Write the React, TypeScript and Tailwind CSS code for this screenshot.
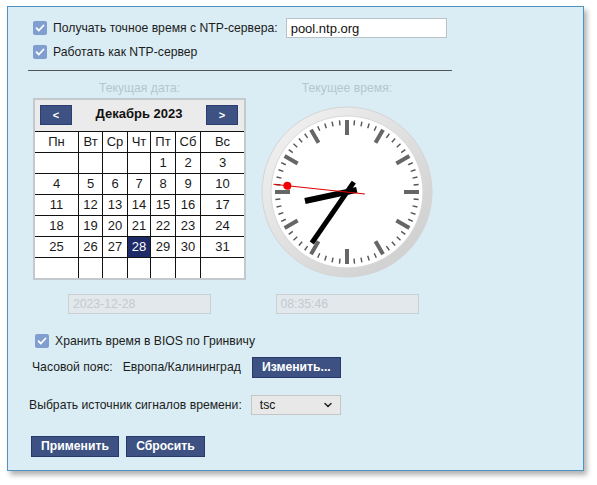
import { ChevronDown } from 'lucide-react';

const font = "font-['Liberation_Sans',Arial,sans-serif]";

function Check({ className = '' }: { className?: string }) {
  return (
    <span className={`flex h-[14px] w-[14px] flex-shrink-0 items-center justify-center rounded-[2px] bg-[#809fd0] ${className}`}>
      <svg width="10" height="10" viewBox="0 0 10 10" fill="none">
        <path d="M1.5 5.2l2.3 2.3L8.5 2.5" stroke="white" strokeWidth={1.8} strokeLinecap="round" strokeLinejoin="round" />
      </svg>
    </span>
  );
}

function Btn({ children, className = '' }: { children: React.ReactNode; className?: string }) {
  return (
    <button className={`flex h-[21px] items-center justify-center border border-[#27386a] bg-[#3d5183] text-[12.2px] font-bold text-white ${className}`}>
      {children}
    </button>
  );
}

const days = ['Пн', 'Вт', 'Ср', 'Чт', 'Пт', 'Сб', 'Вс'];

function Calendar() {
  // December 2023 starts on Friday
  const cells: (number | null)[] = [];
  for (let i = 0; i < 4; i++) cells.push(null);
  for (let d = 1; d <= 31; d++) cells.push(d);
  while (cells.length < 42) cells.push(null);

  return (
    <div className="w-[213px] border-2 border-[#c3c9cc] bg-white">
      <div className="flex h-[31px] items-start justify-between bg-[#ebebeb] px-[5px] pt-[5px]">
        <button className="flex h-[20px] w-[32px] items-center justify-center border border-[#2c3e70] bg-[#3d5183] text-[11px] font-bold text-white">&lt;</button>
        <span className="mt-[-1px] text-[13px] font-bold text-[#111]">Декабрь 2023</span>
        <button className="mr-px flex h-[20px] w-[32px] items-center justify-center border border-[#2c3e70] bg-[#3d5183] text-[11px] font-bold text-white">&gt;</button>
      </div>
      <div className="grid grid-cols-[43px_23px_24px_22px_24px_24px_43px] gap-px border-t border-[#111] bg-[#111]">
        {days.map((d) => (
          <div key={d} className="flex h-[20px] items-center justify-center bg-white text-[13px] text-[#1a1a1a]">
            {d}
          </div>
        ))}
        {cells.map((c, i) => (
          <div
            key={i}
            className={`flex h-[20px] items-center justify-center text-[13px] ${
              c === 28 ? 'bg-[#1e2b66] text-white' : 'bg-white text-[#1a1a1a]'
            }`}
          >
            {c ?? ''}
          </div>
        ))}
      </div>
    </div>
  );
}

function Clock() {
  const c = 86;
  const ticks = [];
  for (let i = 0; i < 60; i++) {
    const hour = i % 5 === 0;
    ticks.push(
      <line
        key={i}
        x1={c}
        y1={c - 72}
        x2={c}
        y2={hour ? c - 57 : c - 67}
        stroke={hour ? '#666' : '#555'}
        strokeWidth={hour ? 4 : 1.4}
        transform={`rotate(${i * 6} ${c} ${c})`}
      />
    );
  }
  const h = (8 + 35.77 / 60) * 30;
  const m = (35 + 46 / 60) * 6;
  const s = 46 * 6;
  return (
    <svg width="172" height="172" viewBox="0 0 172 172">
      <defs>
        <linearGradient id="bezel" x1="0" y1="0" x2="1" y2="1">
          <stop offset="0" stopColor="#f4f4f4" />
          <stop offset="1" stopColor="#cbcbcb" />
        </linearGradient>
      </defs>
      <circle cx={c} cy={c} r={85} fill="url(#bezel)" stroke="#d4d4d4" />
      <circle cx={c} cy={c} r={76} fill="#fff" stroke="#d8d8d8" strokeWidth={1} />
      {ticks}
      <line x1={c} y1={c + 10} x2={c} y2={c - 43} stroke="#000" strokeWidth={6} transform={`rotate(${h} ${c} ${c})`} />
      <line x1={c} y1={c + 12} x2={c} y2={c - 62} stroke="#000" strokeWidth={5} transform={`rotate(${m} ${c} ${c})`} />
      <g transform={`rotate(${s} ${c} ${c})`}>
        <line x1={c} y1={c + 18} x2={c} y2={c - 74} stroke="#e00000" strokeWidth={1} />
        <circle cx={c} cy={c - 60} r={4} fill="#f00000" />
      </g>
    </svg>
  );
}

export default function App() {
  return (
    <div className={`h-[485px] w-[597px] bg-white pl-[7px] pt-[6px] ${font}`}>
      <div className="h-[465px] w-[577px] border border-[#4f93c0] bg-[#daedf4] pt-[11px] shadow-[3px_4px_5px_rgba(0,0,0,0.3)] text-[12.2px] text-[#1c1c1c]">
        <div className="ml-[25px] flex h-[20px] items-center">
          <Check />
          <span className="ml-[6px]">Получать точное время с NTP-сервера:</span>
          <input
            readOnly
            value="pool.ntp.org"
            className="ml-[8px] h-[20px] w-[161px] border border-[#b9c2c7] bg-white px-[4px] text-[13px] text-[#111] outline-none"
          />
        </div>
        <div className="ml-[25px] mt-[4px] flex h-[20px] items-center">
          <Check />
          <span className="ml-[6px]">Работать как NTP-сервер</span>
        </div>
        <div className="ml-[20px] mt-[8px] h-px w-[424px] bg-[#555]" />

        <div className="ml-[25px] mt-[9px] flex">
          <div className="flex w-[213px] flex-col items-center">
            <div className="h-[16px] leading-[16px] text-[#b6c6ce]">Текущая дата:</div>
            <div className="mt-[2px]">
              <Calendar />
            </div>
            <input
              readOnly
              value="2023-12-28"
              className="mt-[14px] h-[20px] w-[143px] border border-[#c8d0d4] bg-[#e2e8eb] px-[4px] text-[12.2px] text-[#c3cbcf] outline-none"
            />
          </div>
          <div className="ml-[15px] flex w-[172px] flex-col items-center">
            <div className="h-[16px] leading-[16px] text-[#b6c6ce]">Текущее время:</div>
            <div className="mt-[10px]">
              <Clock />
            </div>
            <input
              readOnly
              value="08:35:46"
              className="mt-[16px] h-[20px] w-[143px] border border-[#c8d0d4] bg-[#e2e8eb] px-[4px] text-[12.2px] text-[#c3cbcf] outline-none"
            />
          </div>
        </div>

        <div className="ml-[27px] mt-[17px] flex h-[20px] items-center">
          <Check />
          <span className="ml-[6px]">Хранить время в BIOS по Гринвичу</span>
        </div>
        <div className="ml-[24px] mt-[6px] flex h-[21px] items-center">
          <span>Часовой пояс:</span>
          <span className="ml-[10px]">Европа/Калининград</span>
          <Btn className="ml-[11px] w-[89px]">Изменить...</Btn>
        </div>
        <div className="ml-[21px] mt-[17px] flex h-[20px] items-center">
          <span>Выбрать источник сигналов времени:</span>
          <div className="ml-[9px] flex h-[20px] w-[90px] items-center justify-between border border-[#c6c6c6] bg-[#e8e8e8] pl-[8px] pr-[6px]">
            <span className="text-[#111]">tsc</span>
            <ChevronDown size={12} strokeWidth={3} className="text-[#222]" />
          </div>
        </div>
        <div className="ml-[23px] mt-[21px] flex gap-[7px]">
          <Btn className="w-[88px]">Применить</Btn>
          <Btn className="w-[79px]">Сбросить</Btn>
        </div>
      </div>
    </div>
  );
}
